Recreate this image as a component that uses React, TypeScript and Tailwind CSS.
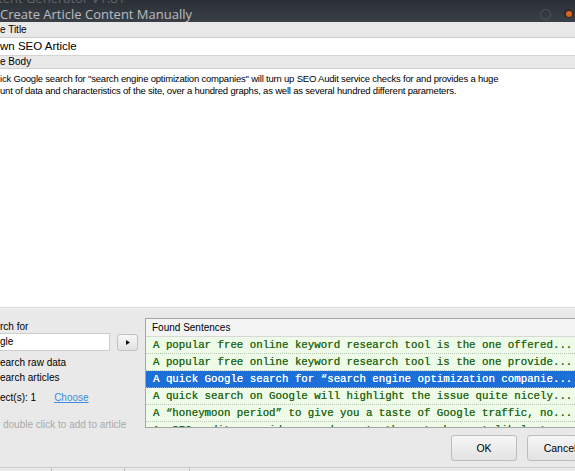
import React from "react";

const sentences = [
  "A popular free online keyword research tool is the one offered...",
  "A popular free online keyword research tool is the one provide...",
  "A quick Google search for \u201csearch engine optimization companie...",
  "A quick search on Google will highlight the issue quite nicely...",
  "A \u201choneymoon period\u201d to give you a taste of Google traffic, no...",
  "A: SEO audits provide a road map to these tasks most likely to...",
];

export default function App() {
  const selected = 2;

  return (
    <div className="w-[575px] h-[471px] overflow-hidden bg-[#e9e9e9] font-['Liberation_Sans',Tahoma,sans-serif] text-[10px] text-black flex flex-col">
      {/* Title bar */}
      <div className="h-[22px] flex-shrink-0 relative bg-gradient-to-b from-[#2b3036] to-[#3b4047] overflow-hidden">
        <div className="absolute -top-[11px] left-[-2px] text-[13px] leading-[18px] text-[#62676d] font-['Open_Sans',sans-serif]">
          tent Generator V1.81
        </div>
        <div className="absolute top-[5px] left-0 text-[13px] leading-[18px] text-[#b9bdc2] font-['Open_Sans',sans-serif]">
          Create Article Content Manually
        </div>
        <span className="absolute top-[9px] left-[540px] w-[11px] h-[11px] rounded-full border border-[#4f545a]" />
        <span className="absolute top-[9px] left-[564px] w-[9px] h-[9px] rounded-full bg-[#2f2a27] flex items-center justify-center">
          <span className="w-[6px] h-[6px] rounded-full bg-[#d9661c]" />
        </span>
      </div>

      {/* Article title */}
      <div className="h-[16px] flex-shrink-0 bg-[#e8e8e8] border-b border-[#cfcfcf] flex items-center leading-none">
        e Title
      </div>
      <div className="h-[18px] flex-shrink-0 bg-white border-b border-[#d4d4d4] flex items-center text-[11.5px] leading-none">
        wn SEO Article
      </div>

      {/* Article body */}
      <div className="h-[13px] flex-shrink-0 bg-[#e8e8e8] border-b border-[#cfcfcf] flex items-center leading-none">
        e Body
      </div>
      <div className="h-[239px] flex-shrink-0 bg-white pt-[4px] text-[9.5px] leading-[12px] tracking-[-0.2px] border-b border-[#d6d6d6]">
        <div>ick Google search for &quot;search engine optimization companies&quot; will turn up SEO Audit service checks for and provides a huge</div>
        <div>unt of data and characteristics of the site, over a hundred graphs, as well as several hundred different parameters.</div>
      </div>

      {/* Search panel */}
      <div className="flex-1 border-t border-[#f4f4f4] relative flex">
        <div className="w-[145px] flex-shrink-0 flex flex-col pt-[11px]">
          <div className="h-[13px] leading-[13px]">rch for</div>
          <div className="flex items-center h-[18px]">
            <div className="w-[110px] h-[18px] bg-white border border-[#cdcdcd] border-l-0 flex items-center leading-none">
              gle
            </div>
            <button className="ml-[7px] w-[21px] h-[17px] rounded-[3px] border border-[#c2c2c2] bg-gradient-to-b from-[#f7f7f7] to-[#e2e2e2] flex items-center justify-center">
              <svg width="4" height="5" viewBox="0 0 4 5">
                <path d="M0 0 L4 2.5 L0 5 Z" fill="#111" />
              </svg>
            </button>
          </div>
          <div className="mt-[4px] h-[15px] leading-[15px]">earch raw data</div>
          <div className="h-[15px] leading-[15px]">earch articles</div>
          <div className="mt-[5px] h-[15px] leading-[15px] flex">
            <span>ect(s): 1</span>
            <span className="ml-[18px] text-[#3a8de0] underline">Choose</span>
          </div>
          <div className="mt-[13px] h-[14px] leading-[14px] pl-[3px] text-[#a9a9a9]">
            double click to add to article
          </div>
        </div>

        <div className="flex-1 flex flex-col pt-[9px]">
          <div className="h-[110px] w-[440px] border border-[#a6a6a6] border-r-0 bg-[#eefbe9] overflow-hidden">
            <div className="h-[18px] bg-[#f4f4f4] border-b border-[#d8d8d8] flex items-center pl-[6px] leading-none">
              Found Sentences
            </div>
            {sentences.map((s, i) => (
              <div
                key={i}
                className={`h-[17px] flex items-center pl-[7px] whitespace-nowrap font-['Liberation_Mono',monospace] text-[10.75px] leading-none border-b border-dotted [text-shadow:0_0_0.4px_currentColor] ${
                  i === selected
                    ? "bg-[#1c6fd8] text-white border-[#8fb6ec]"
                    : "text-[#2c6c1e] border-[#b8c8b4]"
                }`}
              >
                {s}
              </div>
            ))}
          </div>
          <div className="flex gap-[10px] mt-[7px] ml-[306px] w-[200px]">
            <button className="w-[66px] h-[26px] flex-shrink-0 rounded-[3px] border border-[#bcbcbc] bg-gradient-to-b from-[#f6f6f6] to-[#e3e3e3] text-[10.5px] leading-none">
              OK
            </button>
            <button className="w-[66px] h-[26px] flex-shrink-0 rounded-[3px] border border-[#bcbcbc] bg-gradient-to-b from-[#f6f6f6] to-[#e3e3e3] text-[10.5px] leading-none">
              Cancel
            </button>
          </div>
        </div>

        {/* bottom strip */}
        <div className="absolute left-0 right-0 bottom-0 h-[4px] border-t border-[#cbcbcb] flex">
          <div className="w-[52px] border-r border-[#bdbdbd]" />
          <div className="w-[73px] border-r border-[#bdbdbd]" />
          <div className="w-[65px] border-r border-[#bdbdbd]" />
        </div>
      </div>
    </div>
  );
}
